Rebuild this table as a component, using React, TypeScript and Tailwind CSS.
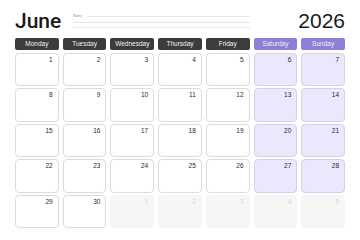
const days = ["Monday", "Tuesday", "Wednesday", "Thursday", "Friday", "Saturday", "Sunday"];

// June 2026 starts on Monday; trailing cells are July 1-5
const cells: { n: number; out: boolean }[] = [
  ...Array.from({ length: 30 }, (_, i) => ({ n: i + 1, out: false })),
  ...Array.from({ length: 5 }, (_, i) => ({ n: i + 1, out: true })),
];

function App() {
  return (
    <div
      className="w-[360px] h-[240px] bg-white px-[15px] overflow-hidden"
      style={{ fontFamily: '"Liberation Sans", Arial, sans-serif' }}
    >
      <div className="flex h-[38px] items-start pt-[9px]">
        <div
          className="w-[58px] text-[21px] font-medium leading-[24px] text-[#1a1a1a]"
          style={{ fontFamily: "Roboto, sans-serif" }}
        >
          June
        </div>
        <div className="flex-1 pt-[5px] pr-[48px]">
          <div className="flex items-center gap-[3px]">
            <span className="text-[4px] leading-[4px] text-[#8b80d8]">Note :</span>
            <div className="flex-1 h-px bg-[#e6e6e6]" />
          </div>
          <div className="mt-[4px] h-px bg-[#e6e6e6]" />
          <div className="mt-[4px] h-px bg-[#e6e6e6]" />
        </div>
        <div className="text-[21px] leading-[24px] text-[#1a1a1a]">2026</div>
      </div>

      <div className="grid grid-cols-7 gap-x-[4px]">
        {days.map((d, i) => (
          <div
            key={d}
            className={`h-[12px] rounded-[2px] flex items-center justify-center text-[6.5px] text-[#f0f0f0] ${
              i >= 5 ? "bg-[#8b7fd6]" : "bg-[#3c3c3c]"
            }`}
          >
            {d}
          </div>
        ))}
      </div>

      <div className="grid grid-cols-7 gap-x-[4px] gap-y-[2px] mt-[3px]">
        {cells.map((c, i) => {
          const weekend = i % 7 >= 5;
          const cls = c.out
            ? "bg-[#f6f6f6] border-[#f6f6f6] text-[#d8d8d8]"
            : weekend
            ? "bg-[#ebe7fc] border-[#d6d0ec] text-[#2a2a2a]"
            : "bg-white border-[#dcdcdc] text-[#2a2a2a]";
          return (
            <div
              key={i}
              className={`h-[33.4px] rounded-[4px] border text-right pr-[5px] pt-[2px] text-[6.5px] leading-[8px] ${cls}`}
            >
              {c.n}
            </div>
          );
        })}
      </div>
    </div>
  );
}

export default App;
